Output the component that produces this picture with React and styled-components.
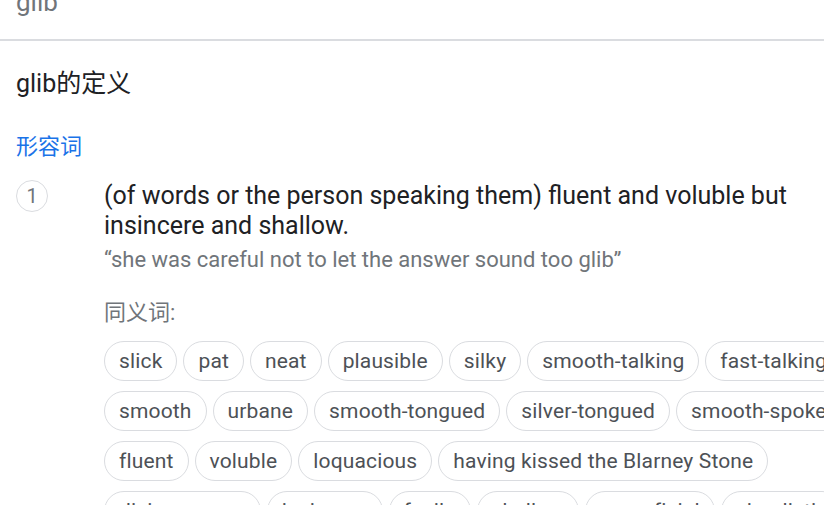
import React from "react";
import styled, { createGlobalStyle } from "styled-components";

const GlobalStyle = createGlobalStyle`
    html, body {
        margin: 0;
        padding: 0;
        background: #fff;
    }
    body {
        font-family: Roboto, "Noto Sans CJK SC", sans-serif;
        overflow: hidden;
    }
`;

const Page = styled.div`
    width: 824px;
    height: 505px;
    overflow: hidden;
`;

const Header = styled.div`
    height: 41px;
    display: flex;
    align-items: flex-end;
    padding: 0 16px 24px;
    box-sizing: border-box;
    border-bottom: 2px solid #dadce0;
    overflow: hidden;
`;

const Query = styled.div`
    font-size: 26px;
    line-height: 1;
    color: #70757a;
`;

const Body = styled.div`
    padding: 27px 16px 0;
`;

const Title = styled.h1`
    margin: 0;
    font-size: 25px;
    font-weight: 400;
    line-height: 32px;
    color: #202124;
`;

const Pos = styled.div`
    margin-top: 32px;
    font-size: 22px;
    line-height: 30px;
    color: #1a73e8;
`;

const Sense = styled.div`
    display: flex;
    margin-top: 17px;
`;

const NumCol = styled.div`
    width: 88px;
    flex-shrink: 0;
`;

const Num = styled.div`
    margin-top: 1px;
    width: 30px;
    height: 30px;
    border: 1px solid #dadce0;
    border-radius: 50%;
    display: flex;
    align-items: center;
    justify-content: center;
    font-size: 20px;
    color: #70757a;
`;

const Content = styled.div`
    flex: 1;
    min-width: 0;
`;

const Definition = styled.div`
    margin-top: 2px;
    font-size: 25px;
    line-height: 30px;
    color: #202124;
`;

const Example = styled.div`
    margin-top: 4px;
    font-size: 22px;
    line-height: 30px;
    color: #70757a;
`;

const SynLabel = styled.div`
    margin-top: 23px;
    font-size: 22px;
    line-height: 30px;
    color: #70757a;
`;

const Chips = styled.div`
    margin-top: 13px;
    display: flex;
    flex-direction: column;
    gap: 10px;
`;

const ChipRow = styled.div`
    display: flex;
    gap: 6px;
    white-space: nowrap;
`;

const Chip = styled.div`
    flex-shrink: 0;
    height: 40px;
    box-sizing: border-box;
    padding: 0 14px;
    border: 1px solid #dadce0;
    border-radius: 20px;
    display: flex;
    align-items: center;
    font-size: 21px;
    letter-spacing: 0.15px;
    color: #4d5156;
`;

const rows = [
    ["slick", "pat", "neat", "plausible", "silky", "smooth-talking", "fast-talking"],
    ["smooth", "urbane", "smooth-tongued", "silver-tongued", "smooth-spoken"],
    ["fluent", "voluble", "loquacious", "having kissed the Blarney Stone"],
    ["disingenuous", "insincere", "facile", "shallow", "superficial", "simplistic"],
];

export default function App() {
    return (
        <Page>
            <GlobalStyle />
            <Header>
                <Query>glib</Query>
            </Header>
            <Body>
                <Title>glib的定义</Title>
                <Pos>形容词</Pos>
                <Sense>
                    <NumCol>
                        <Num>1</Num>
                    </NumCol>
                    <Content>
                        <Definition>
                            (of words or the person speaking them) fluent and voluble but insincere and shallow.
                        </Definition>
                        <Example>“she was careful not to let the answer sound too glib”</Example>
                        <SynLabel>同义词:</SynLabel>
                        <Chips>
                            {rows.map((row, i) => (
                                <ChipRow key={i}>
                                    {row.map((w) => (
                                        <Chip key={w}>{w}</Chip>
                                    ))}
                                </ChipRow>
                            ))}
                        </Chips>
                    </Content>
                </Sense>
            </Body>
        </Page>
    );
}
